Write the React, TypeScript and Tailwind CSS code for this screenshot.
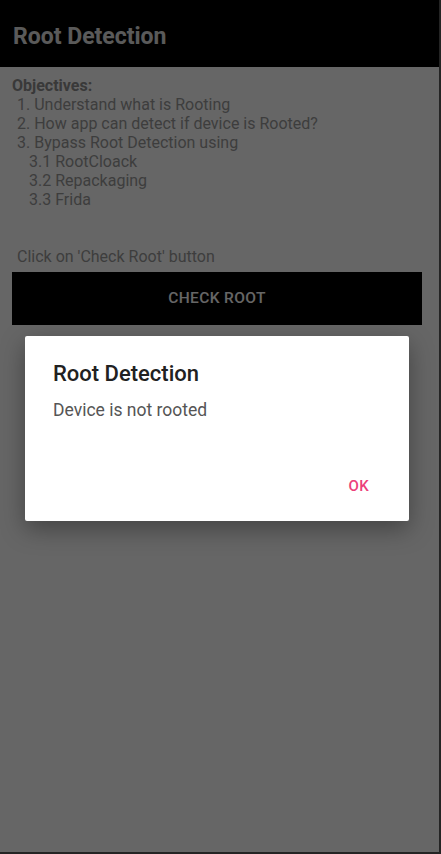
import React from "react";

const objectives = [
  { text: "1. Understand what is Rooting", indent: false },
  { text: "2. How app can detect if device is Rooted?", indent: false },
  { text: "3. Bypass Root Detection using", indent: false },
  { text: "3.1 RootCloack", indent: true },
  { text: "3.2 Repackaging", indent: true },
  { text: "3.3 Frida", indent: true },
];

const RootDialog = () => (
  <div className="ml-[25px] w-[384px] h-[185px] bg-white rounded-[2px] shadow-[0_8px_24px_rgba(0,0,0,0.35)] flex flex-col px-[28px] pt-[24px]">
    <h2 className="text-[22px] leading-[28px] font-medium text-[#212121]">Root Detection</h2>
    <p className="mt-[11px] text-[17.5px] leading-[22px] text-[#555555]">Device is not rooted</p>
    <div className="mt-auto mb-[24px] flex justify-end pr-[12px]">
      <button className="text-[15px] font-medium text-[#ec407a] tracking-wide">OK</button>
    </div>
  </div>
);

export default function App() {
  return (
    <div className="relative w-[441px] h-[854px] overflow-hidden bg-[#5a5a5a] font-['Roboto',sans-serif]">
      <div className="w-[439px] h-[852px] bg-white flex flex-col">
        <header className="h-[67px] bg-black flex items-center px-[13px] pt-[7px]">
          <h1 className="text-[23px] font-bold text-[#e0e0e0]">Root Detection</h1>
        </header>

        <div className="pt-[9px] pl-[12px] text-[16px] leading-[19px] text-[#9a9a9a]">
          <p className="font-bold text-[#8e8e8e]">Objectives:</p>
          {objectives.map((o) => (
            <p key={o.text} className={o.indent ? "pl-[17px]" : "pl-[5px]"}>
              {o.text}
            </p>
          ))}
          <p className="mt-[38px] pl-[5px]">Click on 'Check Root' button</p>
        </div>

        <button className="mt-[6px] ml-[12px] mr-[17px] h-[53px] bg-black text-white text-[15.5px] font-medium tracking-wide">
          CHECK ROOT
        </button>
      </div>

      <div className="absolute inset-0 bg-black/60 pt-[336px]">
        <RootDialog />
      </div>
    </div>
  );
}
